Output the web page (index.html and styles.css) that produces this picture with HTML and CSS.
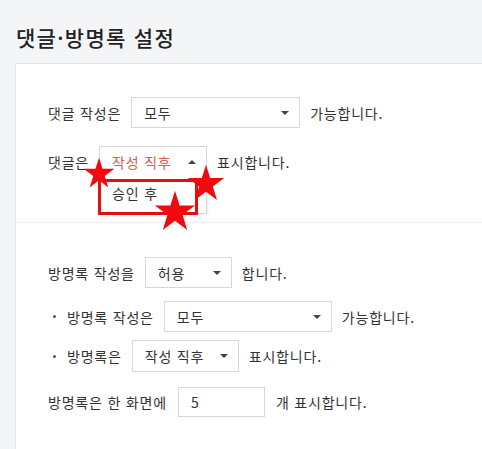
FILE: index.html
```html
<!DOCTYPE html>
<html lang="ko">
<head>
<meta charset="utf-8">
<title>댓글·방명록 설정</title>
<link rel="stylesheet" href="styles.css">
</head>
<body>
<h1 class="title">댓글·방명록 설정</h1>
<div class="card">
  <section class="sec sec-comment">
    <div class="row r1">
      <span class="label">댓글 작성은</span>
      <div class="sel w169"><span>모두</span><i class="arr"></i></div>
      <span class="label">가능합니다.</span>
    </div>
    <div class="row r2">
      <span class="label">댓글은</span>
      <div class="sel w108 open">
        <span class="red">작성 직후</span><i class="arr up"></i>
        <div class="menu"><span>승인 후</span></div>
        <div class="mark"></div>
        <svg class="star s1" viewBox="0 0 100 100"><polygon points="50,2 61,37 98,37 68,59 79,95 50,73 21,95 32,59 2,37 39,37" fill="#f2090d"/></svg>
        <svg class="star s2" viewBox="0 0 100 100"><polygon points="50,2 61,37 98,37 68,59 79,95 50,73 21,95 32,59 2,37 39,37" fill="#f2090d"/></svg>
        <svg class="star s3" viewBox="0 0 100 100"><polygon points="50,2 61,37 98,37 68,59 79,95 50,73 21,95 32,59 2,37 39,37" fill="#f2090d"/></svg>
      </div>
      <span class="label">표시합니다.</span>
    </div>
  </section>
  <section class="sec sec-guest">
    <div class="row r3">
      <span class="label">방명록 작성을</span>
      <div class="sel w87"><span>허용</span><i class="arr"></i></div>
      <span class="label">합니다.</span>
    </div>
    <div class="row r4 sub">
      <span class="dot"></span>
      <span class="label">방명록 작성은</span>
      <div class="sel w168"><span>모두</span><i class="arr"></i></div>
      <span class="label">가능합니다.</span>
    </div>
    <div class="row r5 sub">
      <span class="dot"></span>
      <span class="label">방명록은</span>
      <div class="sel w107"><span>작성 직후</span><i class="arr"></i></div>
      <span class="label">표시합니다.</span>
    </div>
    <div class="row r6">
      <span class="label">방명록은 한 화면에</span>
      <div class="input"><span>5</span></div>
      <span class="label">개 표시합니다.</span>
    </div>
  </section>
</div>
</body>
</html>
```
FILE: styles.css
```css
* { box-sizing: border-box; }
html, body { margin: 0; padding: 0; }
body {
  background: #f4f5f7;
  font-family: "Noto Sans CJK KR", "Noto Sans", sans-serif;
  color: #333;
  font-size: 14px;
  letter-spacing: 0.8px;
  height: 449px;
  overflow: hidden;
}
.title {
  margin: 0;
  padding: 23px 0 0 16px;
  font-size: 21px;
  font-weight: 500;
  line-height: 28px;
  height: 63px;
  color: #222;
  letter-spacing: 1.3px;
}
.card {
  margin-left: 15px;
  background: #fff;
  border-top: 1px solid #e2e4e8;
  border-left: 1px solid #e2e4e8;
  height: 400px;
}
.sec { padding-left: 32px; }
.sec-comment {
  padding-top: 33px;
  padding-bottom: 45px;
  border-bottom: 1px solid #eceef0;
}
.sec-guest { padding-top: 34px; }
.row {
  display: flex;
  align-items: center;
  gap: 10px;
  height: 31px;
}
.r2 { margin-top: 18px; }
.r4 { margin-top: 13px; }
.r5 { margin-top: 8px; height: 32px; }
.r6 { margin-top: 15px; gap: 11px; height: 30px; }
.label { white-space: nowrap; line-height: 20px; }
.sub { padding-left: 5px; }
.sub .dot {
  width: 3px; height: 3px; background: #555; border-radius: 50%;
  margin-right: 1px;
}
.sel, .input {
  position: relative;
  height: 100%;
  border: 1px solid #d5d7db;
  background: #fff;
  display: flex;
  align-items: center;
  padding: 0 12px;
  justify-content: space-between;
}
.sel span, .input span { line-height: 20px; }
.w169 { width: 169px; }
.w108 { width: 108px; }
.w87 { width: 87px; }
.w168 { width: 168px; }
.w107 { width: 107px; }
.input { width: 87px; }
.arr {
  width: 0; height: 0;
  border-left: 4px solid transparent;
  border-right: 4px solid transparent;
  border-top: 4px solid #444;
  margin-right: -2px;
}
.arr.up { border-top: 0; border-bottom: 4px solid #444; }
.red { color: #e0584e; }
.open { border-bottom: 0; }
.menu {
  position: absolute;
  left: -1px; top: 30px;
  width: 108px; height: 37px;
  background: #fff;
  border: 1px solid #d5d7db;
  border-top: 0;
  padding: 6px 0 0 12px;
  box-shadow: 1px 1px 2px rgba(0,0,0,0.08);
}
.menu span { line-height: 20px; }
.mark {
  position: absolute;
  left: -2px; top: 32px;
  width: 100px; height: 36px;
  border: 3px solid #e30e0e;
}
.star { position: absolute; }
.s1 { left: -17px; top: 10px; width: 32px; height: 32px; }
.s2 { left: 87px; top: 17px; width: 38px; height: 38px; }
.s3 { left: 54px; top: 43px; width: 42px; height: 42px; }
```
